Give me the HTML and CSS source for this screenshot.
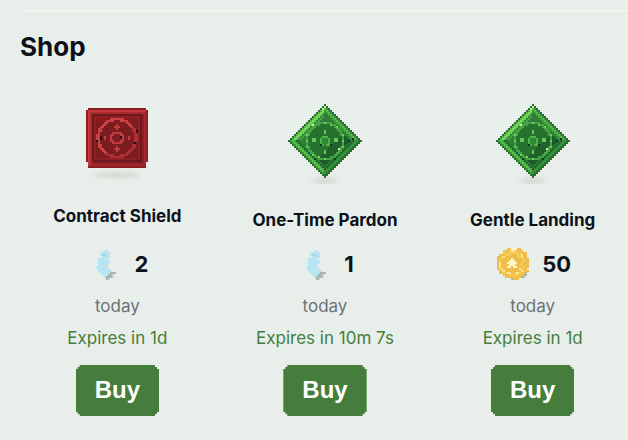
FILE: index.html
```html
<!DOCTYPE html>
<html lang="en">
<head>
<meta charset="utf-8">
<meta name="viewport" content="width=device-width, initial-scale=1">
<title>Shop</title>
<link rel="stylesheet" href="styles.css">
</head>
<body>
<main class="shop">
  <hr class="rule">
  <h1 class="heading">Shop</h1>
  <div class="items">
    <article class="card">
      <svg class="art art-square" data-sprite="square" viewBox="0 0 76 80" aria-hidden="true"></svg>
      <h2 class="name">Contract Shield</h2>
      <div class="price"><svg class="coin" data-sprite="shard" viewBox="0 0 32 32" aria-hidden="true"></svg><span>2</span></div>
      <p class="period">today</p>
      <p class="expires">Expires in 1d</p>
      <button class="buy" type="button">Buy</button>
    </article>
    <article class="card">
      <svg class="art art-diamond" data-sprite="diamond" viewBox="0 0 76 84" aria-hidden="true"></svg>
      <h2 class="name">One-Time Pardon</h2>
      <div class="price"><svg class="coin" data-sprite="shard" viewBox="0 0 32 32" aria-hidden="true"></svg><span>1</span></div>
      <p class="period">today</p>
      <p class="expires">Expires in 10m 7s</p>
      <button class="buy" type="button">Buy</button>
    </article>
    <article class="card">
      <svg class="art art-diamond" data-sprite="diamond" viewBox="0 0 76 84" aria-hidden="true"></svg>
      <h2 class="name">Gentle Landing</h2>
      <div class="price"><svg class="coin" data-sprite="gold" viewBox="0 0 32 32" aria-hidden="true"></svg><span>50</span></div>
      <p class="period">today</p>
      <p class="expires">Expires in 1d</p>
      <button class="buy" type="button">Buy</button>
    </article>
  </div>
</main>
<script src="sprites.js"></script>
</body>
</html>
```
FILE: styles.css
```css
* { box-sizing: border-box; }
body {
  margin: 0;
  background: #e8efea;
  color: #0d111b;
  font-family: Inter, "Liberation Sans", sans-serif;
  font-size: 17px;
  line-height: 24px;
}
.shop { padding: 10px 0 24px 20px; }
.rule { height: 2px; margin: 0 0 0 2px; border: 0; background: #f3f5f1; }
.heading { margin: 18px 0 36px; font-size: 26px; line-height: 34px; font-weight: 700; }
.items { display: grid; grid-template-columns: repeat(3, 1fr); gap: 17px; }
.card { display: flex; flex-direction: column; align-items: center; }
.art { display: block; width: 76px; }
.art-square { height: 80px; }
.art-diamond { height: 84px; }
.name { margin: 24px 0 16px; font-size: 17px; line-height: 24px; font-weight: 700; }
.price { display: flex; align-items: center; gap: 16px; margin-top: auto; font-size: 22px; line-height: 32px; font-weight: 700; }
.coin { display: block; width: 32px; height: 32px; overflow: visible; }
.period { margin: 14px 0 0; color: #6c7178; }
.expires { margin: 8px 0 0; color: #457d3d; }
.items { padding-left: 2px; }
.buy {
  margin: 15px 0 0;
  padding: 8px 19px 9px;
  border: 0;
  background: #457d3c;
  color: #fff;
  font-family: "Liberation Sans", sans-serif;
  font-size: 24px;
  line-height: 34px;
  font-weight: 700;
  cursor: pointer;
  clip-path: polygon(0 4px, 2px 4px, 2px 2px, 4px 2px, 4px 0, calc(100% - 4px) 0, calc(100% - 4px) 2px, calc(100% - 2px) 2px, calc(100% - 2px) 4px, 100% 4px, 100% calc(100% - 4px), calc(100% - 2px) calc(100% - 4px), calc(100% - 2px) calc(100% - 2px), calc(100% - 4px) calc(100% - 2px), calc(100% - 4px) 100%, 4px 100%, 4px calc(100% - 2px), 2px calc(100% - 2px), 2px calc(100% - 4px), 0 calc(100% - 4px));
}
```
FILE: sprites.js
```js
// Pixel sprites: every cell is a 2px square placed on the sprite's own grid.
const CELL = 2;

function cells(size, ox, oy, colourAt) {
  let out = '<g shape-rendering="crispEdges">';
  for (let y = 0; y < size; y++) {
    for (let x = 0; x < size; x++) {
      const c = colourAt(x, y);
      if (c) out += `<rect x="${ox + x * CELL}" y="${oy + y * CELL}" width="${CELL}" height="${CELL}" fill="${c}"/>`;
    }
  }
  return out + '</g>';
}

function shadow(cx, cy, rx) {
  return `<ellipse cx="${cx}" cy="${cy}" rx="${rx}" ry="3" fill="#d3d8d2" style="filter:blur(2px)"/>`;
}

const key = (x, y) => x + ',' + y;

function square(x, y) {
  const edge = Math.min(x, y, 30 - x, 29 - y);
  if (y > 29) return null;
  const cx = Math.min(x, 30 - x), cy = Math.min(y, 29 - y);
  if (cx + cy === 0 || (cx === 0 && y > 26)) return null;
  const dx = x - 15, dy = y - 14.5, r = Math.hypot(dx, dy);
  const black = ['5,16', '7,15', '7,14', '25,11', '17,14', '24,17'];
  if (black.includes(key(x, y))) return '#260b10';
  if (edge === 0) return '#8a1f24';
  if (edge === 1) return y === 1 || x === 1 ? '#c63537' : '#a52529';
  if (edge === 2) return y === 2 ? '#a9292c' : x === 2 ? '#ad292d' : '#8d2024';
  if (edge === 3) return '#6d181c';
  if (Math.abs(r - 9.4) < 0.8) return dx + dy < 2 ? '#c94141' : '#b23033';
  if (Math.abs(r - 2.8) < 0.7) return '#c23a3b';
  if ((Math.abs(dx) < 2 && Math.abs(dy) === 5.5) || (Math.abs(dx) < 1 && Math.abs(Math.abs(dy) - 5.5) < 1.2) || (Math.abs(dy) < 1 && Math.abs(Math.abs(dx) - 6) < 1)) return '#c33a3b';
  if (edge === 4) return '#8e2024';
  return y < 7 ? '#89191f' : y > 22 ? '#7e1b20' : '#7b1c20';
}

function diamond(x, y) {
  const dx = x - 18, dy = y - 18, d = Math.abs(dx) + Math.abs(dy);
  if (d > 18) return null;
  const r = Math.hypot(dx, dy);
  const top = dy < 0, left = dx < 0, lit = top && left;
  if (['18,1', '17,2', '12,10', '25,22'].includes(key(x, y))) return '#b9f0a0';
  if (['30,18', '32,17', '16,20', '21,20', '23,27', '13,27'].includes(key(x, y))) return '#0c331a';
  if (d === 18) return '#2a6e33';
  if (d === 17) return lit ? '#55b648' : top ? '#38943a' : left ? '#3e9c3d' : '#25752f';
  if (d === 16) return lit ? '#7ad95d' : top ? '#55b748' : left ? '#5ebe4b' : '#3b963b';
  if (d === 15) return lit ? '#66c950' : top ? '#3f9f3e' : left ? '#44a642' : '#318537';
  if (d === 14) return top ? '#35863a' : '#1f642c';
  if (Math.abs(r - 9) < 0.75) return (x * 5 + y * 3) % 9 === 0 ? '#6ccd54' : '#43a443';
  if ((Math.abs(dx) === 2 && dy >= -1 && dy <= 2) || (dy === -2 && Math.abs(dx) < 2) || (dy === 2 && Math.abs(dx) === 1)) return '#4db647';
  if ((Math.abs(dx) < 1 && (dy === -5 || dy === -4 || dy === 5 || dy === 6)) || (Math.abs(dy) < 2 && Math.abs(Math.abs(dx) - 5.5) < 1 && dy !== 1)) return '#62cb50';
  if (r < 8.5) return r < 2 ? '#2f8938' : dx + dy > 5 ? '#1f602c' : '#28722f';
  if (d === 13) return lit ? '#48a740' : '#2c7b33';
  return dx + dy > 4 ? '#1d592a' : '#2e8036';
}

const maps = {
  shard: {
    palette: { a: '#b9e4f1', w: '#d3eff7', b: '#a5d4e3', s: '#a9b3b2', t: '#c7cecb' },
    rows: [
      '', '......waa', '.....aaaaa', '.....abbaa', '......aaaa', '....aaaaa', '....aaaaaa', '...waaaaaa',
      '....aaaaa', '...aaaaaa', '...waaaaaa', '....aaaaaaa', '.....aaaaasss', '......aaasst', '.......assst', '........st'
    ]
  },
  gold: {
    palette: { o: '#f0bd49', y: '#f5cb58', w: '#fff5c8', s: '#b3b5a5', c: '#fae494' },
    rows: [
      '.....oowwwoo', '...yooyccyooo', '.wcyoyyyyyyyooo', '.oooyyyoooyycoo', 'ooycooooooyycoo', 'oyyooyowyooooyoo',
      'oyoooowwwooooyoo', 'ocooowwwwwooyooo', 'ocooyowwwyooyooo', 'ocooowwowwoooyoo', 'oycoooooooocyoo', '.oycoooooooocyoo',
      '.ooyyccooccyyos', '...oooyyyyyooss', '....ooooooooss', '.......sooo'
    ]
  }
};

function fromMap(name, ox) {
  const { palette, rows } = maps[name];
  return cells(16, ox, 0, (x, y) => palette[(rows[y] || '')[x]]);
}

const sprites = {
  square: () => shadow(38, 75, 23) + cells(31, 7, 8, square),
  diamond: () => shadow(38, 81, 13) + cells(37, 1, 4, diamond),
  shard: () => fromMap('shard', 4),
  gold: () => fromMap('gold', 3)
};

document.querySelectorAll('svg[data-sprite]').forEach((svg) => {
  svg.innerHTML = sprites[svg.dataset.sprite]();
});
```
